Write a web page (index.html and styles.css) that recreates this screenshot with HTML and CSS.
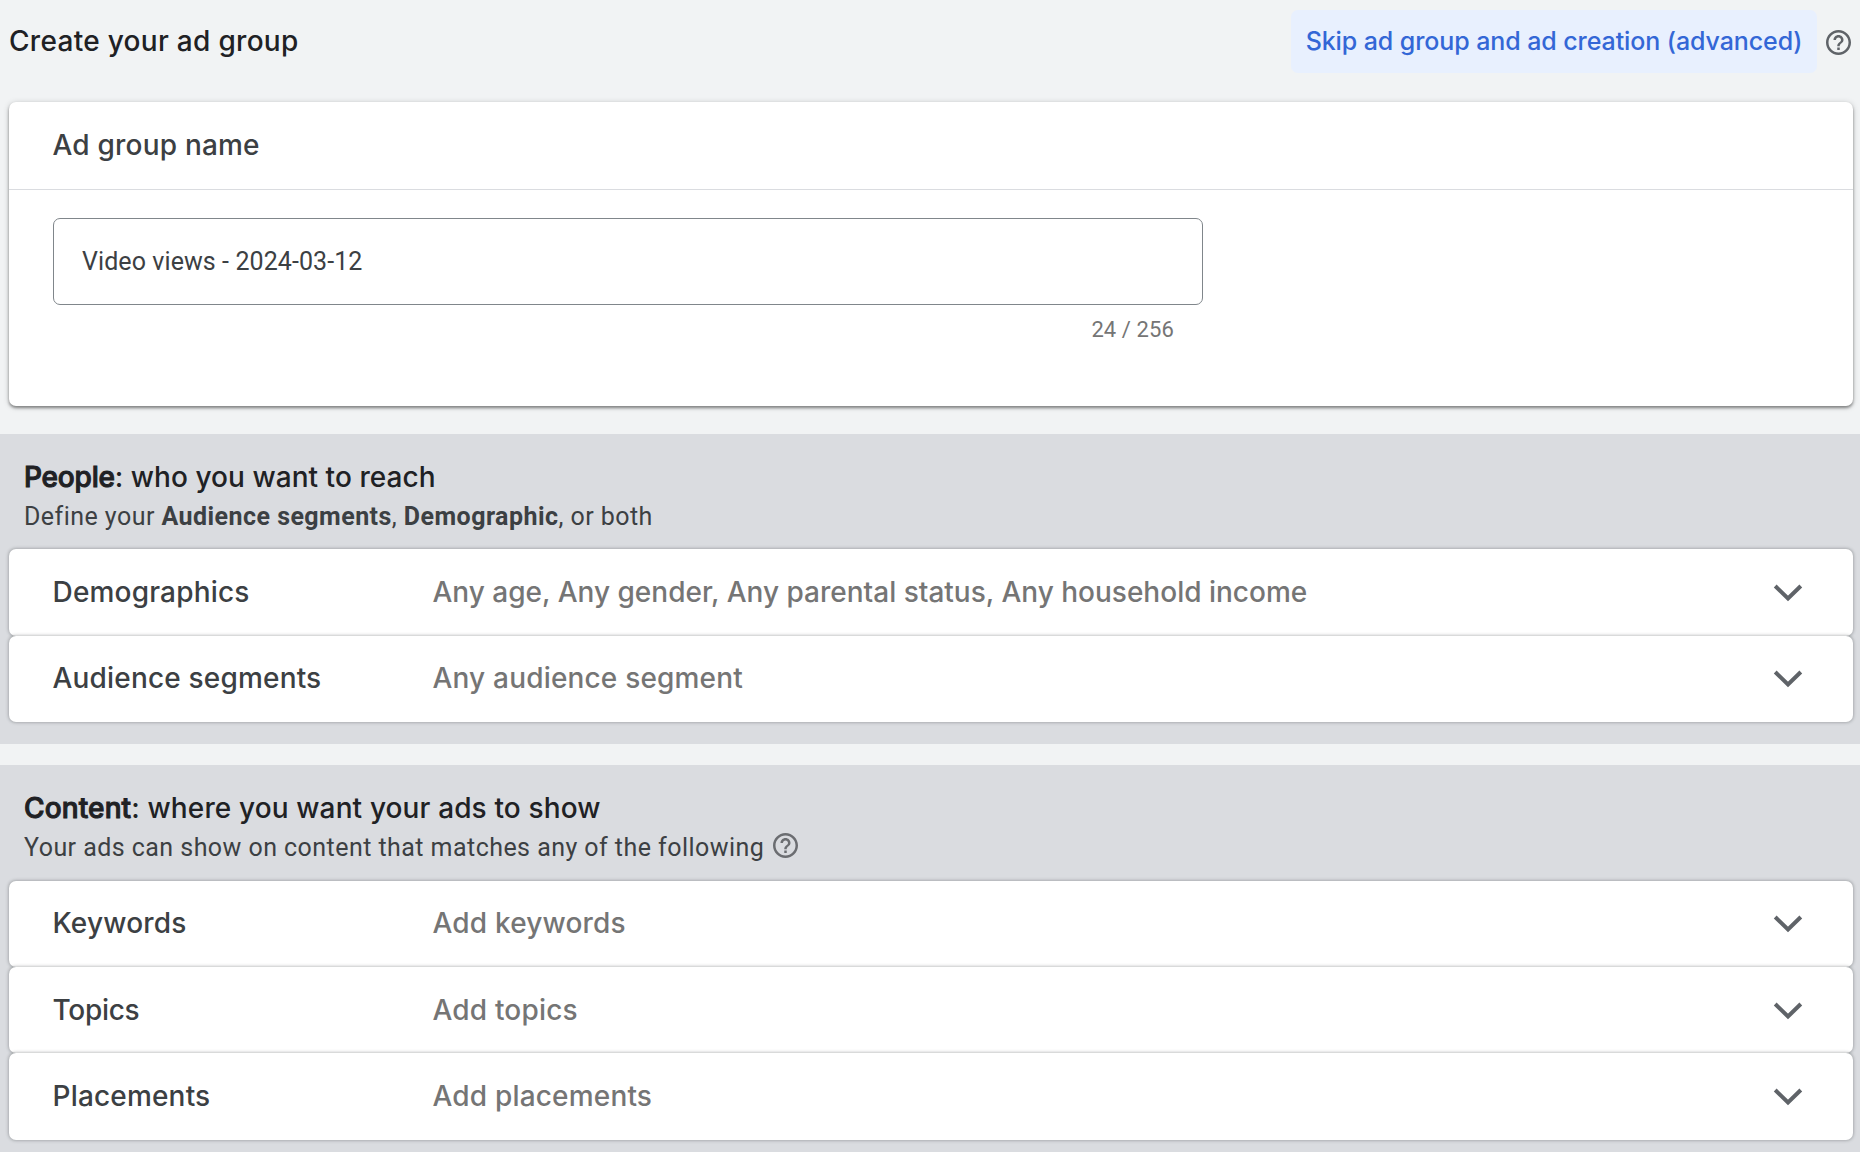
FILE: index.html
```
<!DOCTYPE html>
<html lang="en">
<head>
<meta charset="utf-8">
<title>Create your ad group</title>
<link rel="stylesheet" href="styles.css">
</head>
<body>
<svg class="defs" width="0" height="0" aria-hidden="true">
  <symbol id="help" viewBox="2 2 20 20">
    <path d="M11 18h2v-2h-2v2zm1-16C6.48 2 2 6.48 2 12s4.48 10 10 10 10-4.48 10-10S17.52 2 12 2zm0 18c-4.41 0-8-3.59-8-8s3.59-8 8-8 8 3.59 8 8-3.59 8-8 8zm0-14c-2.21 0-4 1.79-4 4h2c0-1.1.9-2 2-2s2 .9 2 2c0 2-3 1.75-3 5h2c0-2.25 3-2.5 3-5 0-2.210-1.790-4-4-4z"/>
  </symbol>
  <symbol id="chevron" viewBox="0 0 32 20">
    <path d="M3.200 4 16 16.500 28.800 4" fill="none" stroke="currentColor" stroke-width="4"/>
  </symbol>
</svg>

<header class="page-header">
  <h1 class="page-title">Create your ad group</h1>
  <div class="page-actions">
    <button class="skip-button" type="button">Skip ad group and ad creation (advanced)</button>
    <svg class="help-icon"><use href="#help"/></svg>
  </div>
</header>

<main>
  <section class="name-card">
    <h2 class="name-card-title">Ad group name</h2>
    <div class="name-field">
      <input class="name-input" type="text" value="Video views - 2024-03-12" aria-label="Ad group name">
      <div class="name-count">24 / 256</div>
    </div>
  </section>

  <section class="targeting">
    <h2 class="targeting-title people"><span class="strong">People</span>: who you want to reach</h2>
    <p class="targeting-hint">Define your <b>Audience segments</b>, <b>Demographic</b>, or both</p>
    <div class="row tall">
      <span class="label">Demographics</span>
      <span class="value long">Any age, Any gender, Any parental status, Any household income</span>
      <svg class="chevron"><use href="#chevron"/></svg>
    </div>
    <div class="row raised">
      <span class="label">Audience segments</span>
      <span class="value">Any audience segment</span>
      <svg class="chevron"><use href="#chevron"/></svg>
    </div>
  </section>

  <section class="targeting content">
    <h2 class="targeting-title"><span class="strong">Content</span>: where you want your ads to show</h2>
    <p class="targeting-hint">Your ads can show on content that matches any of the following <svg class="help-icon"><use href="#help"/></svg></p>
    <div class="row raised">
      <span class="label">Keywords</span>
      <span class="value">Add keywords</span>
      <svg class="chevron"><use href="#chevron"/></svg>
    </div>
    <div class="row">
      <span class="label topics">Topics</span>
      <span class="value">Add topics</span>
      <svg class="chevron"><use href="#chevron"/></svg>
    </div>
    <div class="row tall">
      <span class="label">Placements</span>
      <span class="value">Add placements</span>
      <svg class="chevron"><use href="#chevron"/></svg>
    </div>
  </section>
</main>
</body>
</html>
```
FILE: styles.css
```
* {
  box-sizing: border-box;
}

html,
body {
  height: 100%;
}

body {
  margin: 0;
  background: #f1f3f4;
  color: #202124;
  font-family: Inter, "Liberation Sans", sans-serif;
  overflow: hidden;
}

h1,
h2,
p {
  margin: 0;
}

.defs {
  display: block;
}

.page-header {
  display: flex;
  justify-content: space-between;
  height: 102px;
  padding: 10px 9px 29px 9px;
}

.page-title {
  font-size: 28px;
  font-weight: 500;
  line-height: 63px;
  letter-spacing: 0.3px;
}

.page-actions {
  display: flex;
  align-items: center;
  gap: 9px;
}

.skip-button {
  width: 526px;
  height: 63px;
  padding: 0;
  border: 0;
  border-radius: 7px;
  background: #e8f0fe;
  color: #3367d6;
  font: 500 25px/63px Inter, "Liberation Sans", sans-serif;
  letter-spacing: -0.09px;
  white-space: nowrap;
}

.help-icon {
  width: 25px;
  height: 25px;
  fill: #5f6368;
}

.page-actions .help-icon {
  margin-top: 1px;
}

.name-card {
  height: 304px;
  margin: 0 7px 28px 9px;
  border-radius: 7px;
  background: #fff;
  box-shadow: 0 2px 3px rgba(0, 0, 0, 0.4), 0 1px 6px rgba(0, 0, 0, 0.18);
}

.name-card-title {
  height: 88px;
  padding-left: 43.500px;
  border-bottom: 1px solid #dadce0;
  color: #3c4043;
  font-size: 28px;
  font-weight: 500;
  line-height: 87px;
  letter-spacing: 0.2px;
}

.name-field {
  width: 1150px;
  margin: 28px 0 0 44px;
}

.name-input {
  display: block;
  width: 100%;
  height: 87px;
  padding: 0 28px;
  border: 1px solid #80868b;
  border-radius: 7px;
  background: #fff;
  color: #3c4043;
  font: 400 25px Roboto, sans-serif;
  letter-spacing: 0.08px;
}

.name-count {
  padding: 10px 29px 0 0;
  color: #757575;
  font: 400 22px/30px Roboto, sans-serif;
  letter-spacing: 0.1px;
  text-align: right;
}

.targeting {
  padding: 23px 7px 22px 9px;
  background: #dadce0;
}

.targeting.content {
  height: 400px;
  margin-top: 21px;
}

.targeting-title {
  padding-left: 15px;
  font-size: 28px;
  font-weight: 500;
  line-height: 40px;
  letter-spacing: 0.13px;
}

.targeting-title.people {
  letter-spacing: 0.05px;
}

.people .strong {
  letter-spacing: -0.2px;
}

.strong {
  -webkit-text-stroke: 1px currentColor;
}

.targeting-hint {
  display: flex;
  height: 52px;
  padding-left: 15px;
  color: #3c4043;
  font: 400 25px/39px Roboto, sans-serif;
  letter-spacing: 0.45px;
  white-space: pre;
}

.content .targeting-hint {
  height: 53px;
}

.targeting-hint .help-icon {
  margin: 5px 0 0 2px;
  fill: #6b6d71;
}

.row {
  position: relative;
  display: flex;
  align-items: center;
  height: 86px;
  padding: 0 49.500px 0 43.500px;
  border-radius: 7px;
  background: #fff;
  box-shadow: 0 0 3px 1px rgba(60, 64, 67, 0.3);
  font-size: 28px;
  font-weight: 500;
  letter-spacing: 0.18px;
}

.row.tall {
  height: 87px;
  padding-bottom: 1px;
}

.row.raised {
  padding-bottom: 2px;
}

.label {
  width: 380px;
  color: #3c4043;
}

.label.topics {
  letter-spacing: -0.3px;
}

.value {
  flex: 1;
  color: #757575;
}

.value.long {
  letter-spacing: 0;
}

.chevron {
  width: 32px;
  height: 20px;
  color: #5f6368;
}
```
